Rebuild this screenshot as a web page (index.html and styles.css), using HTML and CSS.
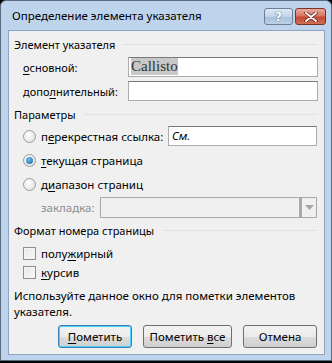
FILE: index.html
```html
<!DOCTYPE html>
<html>
<head>
  <meta charset="UTF-8" />
  <title>Определение элемента указателя</title>
  <link rel="stylesheet" href="styles.css">
</head>
<body>
  <div class="window">
    <div class="titlebar">
      <span class="title">Определение элемента указателя</span>
      <div class="caption-buttons">
        <button class="cap help">?</button>
        <button class="cap close">
          <svg width="14" height="10" viewBox="0 0 14 10">
            <path d="M2 1 L12 9 M12 1 L2 9" stroke="#5a1a10" stroke-width="3.4" stroke-linecap="round"/>
            <path d="M2 1 L12 9 M12 1 L2 9" stroke="#fff" stroke-width="2" stroke-linecap="round"/>
          </svg>
        </button>
      </div>
    </div>

    <div class="client">
      <div class="group-title">Элемент указателя</div>
      <div class="entry-rows">
        <label><u>о</u>сновной:</label>
        <div class="field main-field"><span class="selected">Callisto</span></div>
        <label>допо<u>л</u>нительный:</label>
        <div class="field"></div>
      </div>

      <div class="group-title">Параметры</div>
      <div class="options">
        <div class="option-row">
          <span class="radio"></span>
          <span class="opt-label">п<u>е</u>рекрестная ссылка:</span>
          <div class="field see-field">См.</div>
        </div>
        <div class="option-row">
          <span class="radio checked"></span>
          <span class="opt-label"><u>т</u>екущая страница</span>
        </div>
        <div class="option-row">
          <span class="radio"></span>
          <span class="opt-label">д<u>и</u>апазон страниц</span>
        </div>
        <div class="bookmark-row">
          <span class="disabled-label">закладка:</span>
          <div class="combo">
            <div class="combo-text"></div>
            <div class="combo-arrow">
              <svg width="9" height="5" viewBox="0 0 9 5"><path d="M0 0 H9 L4.5 5 Z" fill="#a6a6a6"/></svg>
            </div>
          </div>
        </div>
      </div>

      <div class="group-title">Формат номера страницы</div>
      <div class="checks">
        <div class="check-row"><span class="checkbox"></span><span>полу<u>ж</u>ирный</span></div>
        <div class="check-row"><span class="checkbox"></span><span><u>к</u>урсив</span></div>
      </div>

      <p class="hint">Используйте данное окно для пометки элементов указателя.</p>

      <div class="buttons">
        <button class="btn default"><u>П</u>ометить</button>
        <button class="btn wide">Пометить <u>в</u>се</button>
        <button class="btn">Отмена</button>
      </div>
    </div>
  </div>
</body>
</html>
```

FILE: styles.css
```css
html, body {
  margin: 0;
  background: #000;
}

body {
  width: 332px;
  height: 363px;
  font-family: "Noto Sans", "Open Sans", sans-serif;
  font-size: 11px;
  color: #000;
}

u {
  text-decoration-thickness: 1px;
  text-underline-offset: 2px;
}

.window {
  width: 332px;
  height: 361px;
  box-sizing: border-box;
  background: #bed4ec;
  border: 1px solid #5d6c7f;
  border-radius: 6px 6px 0 0;
  padding: 0 6px 5px 7px;
  display: flex;
  flex-direction: column;
}

.titlebar {
  height: 29px;
  display: flex;
  align-items: center;
  justify-content: space-between;
  padding-left: 4px;
}

.title {
  font-size: 11.5px;
  color: #000;
  margin-top: -1px;
}

.caption-buttons {
  display: flex;
  gap: 2px;
  align-self: flex-start;
  margin-top: 7px;
  margin-right: -1px;
}

.cap {
  height: 17px;
  padding: 0;
  border: 1px solid #6d7f95;
  border-radius: 3px;
  display: flex;
  align-items: center;
  justify-content: center;
}

.help {
  width: 29px;
  background: linear-gradient(#dde8f4 0%, #c2d4e8 50%, #a9c0db 51%, #bcd0e6 100%);
  color: #fff;
  font-family: "DejaVu Sans", sans-serif;
  font-weight: bold;
  font-size: 12px;
  line-height: 14px;
  text-shadow: 0 0 1px #4a5f7a, 0 0 1px #4a5f7a;
}

.close {
  width: 31px;
  border-color: #7a3126;
  background: linear-gradient(#e9a99c 0%, #d87763 45%, #c44a33 55%, #d46f55 100%);
}

.client {
  flex: 1;
  background: #f0f0f0;
  border: 1px solid #8ea4c1;
  padding: 5px 6px 0 5px;
}

.group-title {
  display: flex;
  align-items: center;
  gap: 8px;
  height: 17px;
}

.group-title::after {
  content: "";
  flex: 1;
  height: 1px;
  background: #dde3ea;
}

.entry-rows {
  display: grid;
  grid-template-columns: 105px 190px;
  row-gap: 4px;
  align-items: center;
  padding: 4px 0 5px 9px;
}

.field {
  height: 20px;
  box-sizing: border-box;
  border: 1px solid #acacac;
  border-top-color: #7a7a7a;
  background: #fff;
}

.main-field {
  font-family: "Liberation Serif", serif;
  font-size: 15px;
  line-height: 17px;
  padding: 0 0 0 2px;
  color: #333;
}

.selected {
  background: #c8c8c8;
  display: inline-block;
  line-height: 17px;
}

.options {
  padding: 1px 0 3px 9px;
}

.option-row {
  display: flex;
  align-items: center;
  height: 24px;
}

.radio {
  width: 11px;
  height: 11px;
  border-radius: 50%;
  border: 1px solid #9a9a9a;
  background: radial-gradient(circle at 40% 35%, #ffffff, #dcdcdc);
  margin-right: 5px;
  position: relative;
}

.radio.checked::after {
  content: "";
  position: absolute;
  left: 2px;
  top: 2px;
  width: 7px;
  height: 7px;
  border-radius: 50%;
  background: radial-gradient(circle at 40% 35%, #6ac1ef, #1d5e95);
}

.opt-label {
  width: 127px;
  font-size: 11.5px;
}

.see-field {
  width: 149px;
  font-style: italic;
  padding-left: 3px;
  line-height: 18px;
  font-size: 11.5px;
}

.bookmark-row {
  display: flex;
  align-items: center;
  height: 23px;
  padding-left: 18px;
}

.disabled-label {
  color: #8d8d8d;
  width: 59px;
  font-size: 11.5px;
}

.combo {
  width: 217px;
  height: 21px;
  box-sizing: border-box;
  border: 1px solid #a9a9a9;
  display: flex;
  background: #f0f0f0;
}

.combo-text {
  flex: 1;
  border-right: 3px solid #a9a9a9;
}

.combo-arrow {
  width: 14px;
  display: flex;
  align-items: center;
  justify-content: center;
}

.checks {
  padding: 5px 0 0 9px;
}

.check-row {
  display: flex;
  align-items: center;
  gap: 5px;
  height: 19px;
  font-size: 11.5px;
}

.checkbox {
  width: 11px;
  height: 11px;
  border: 1px solid #8e8f8f;
  background: linear-gradient(135deg, #e6e6e6, #fbfbfb);
  box-shadow: inset 0 0 0 1px #f4f4f4;
}

.hint {
  margin: 6px 0 0 0;
  line-height: 16px;
  width: 295px;
  font-size: 11.5px;
}

.buttons {
  display: flex;
  justify-content: flex-end;
  gap: 11px;
  margin-top: 5px;
  padding-right: 1px;
}

.btn {
  height: 23px;
  width: 74px;
  font-family: inherit;
  font-size: 11.5px;
  border: 1px solid #707070;
  border-radius: 3px;
  background: linear-gradient(#f2f2f2 0%, #ebebeb 50%, #dddddd 51%, #cfcfcf 100%);
  padding: 0;
}

.btn.wide {
  width: 89px;
}

.btn.default {
  border-color: #3c7fb1;
  box-shadow: inset 0 0 0 1px #48d2ff;
}
```
